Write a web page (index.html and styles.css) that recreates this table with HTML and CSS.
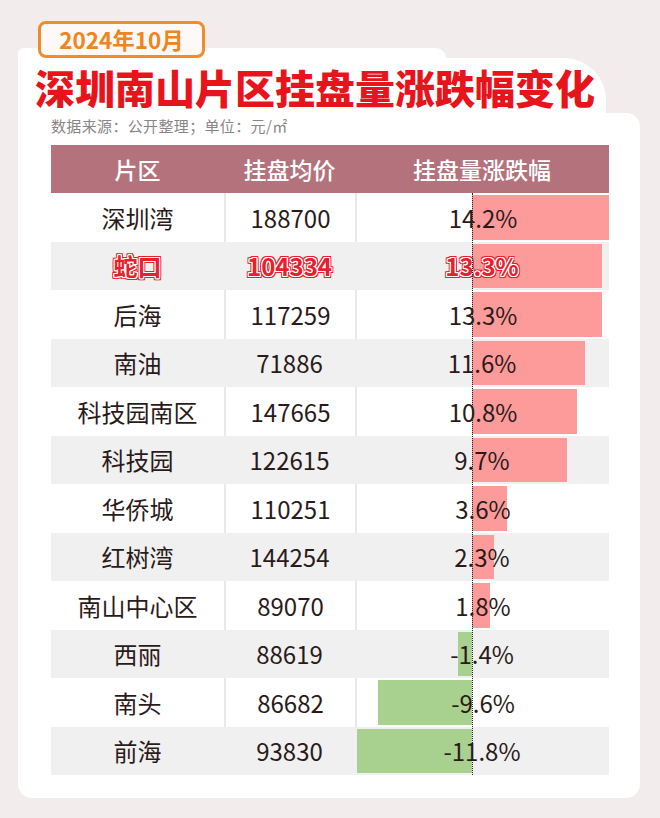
FILE: index.html
```html
<!DOCTYPE html>
<html lang="zh">
<head>
<meta charset="utf-8">
<title>深圳南山片区挂盘量涨跌幅变化</title>
<link rel="stylesheet" href="styles.css">
</head>
<body>
<div class="page">
  <div class="badge">2024年10月</div>
  <div class="tab"></div>
  <div class="head">
    <h1 class="title">深圳南山片区挂盘量涨跌幅变化</h1>
  </div>
  <div class="card">
    <p class="source">数据来源：公开整理；单位：元/㎡</p>
    <div class="table">
      <div class="thead">
        <div>片区</div><div>挂盘均价</div><div>挂盘量涨跌幅</div>
      </div>
      <div class="tbody">
        <div class="row"><div class="c">深圳湾</div><div class="c">188700</div><div class="c pct"><span class="bar pos" style="width:138.5px"></span><span class="v">14.2%</span></div></div>
        <div class="row alt hl"><div class="c">蛇口</div><div class="c">104334</div><div class="c pct"><span class="bar pos" style="width:129.7px"></span><span class="v">13.3%</span></div></div>
        <div class="row"><div class="c">后海</div><div class="c">117259</div><div class="c pct"><span class="bar pos" style="width:129.7px"></span><span class="v">13.3%</span></div></div>
        <div class="row alt"><div class="c">南油</div><div class="c">71886</div><div class="c pct"><span class="bar pos" style="width:113.1px"></span><span class="v">11.6%</span></div></div>
        <div class="row"><div class="c">科技园南区</div><div class="c">147665</div><div class="c pct"><span class="bar pos" style="width:105.3px"></span><span class="v">10.8%</span></div></div>
        <div class="row alt"><div class="c">科技园</div><div class="c">122615</div><div class="c pct"><span class="bar pos" style="width:94.6px"></span><span class="v">9.7%</span></div></div>
        <div class="row"><div class="c">华侨城</div><div class="c">110251</div><div class="c pct"><span class="bar pos" style="width:35.1px"></span><span class="v">3.6%</span></div></div>
        <div class="row alt"><div class="c">红树湾</div><div class="c">144254</div><div class="c pct"><span class="bar pos" style="width:22.4px"></span><span class="v">2.3%</span></div></div>
        <div class="row"><div class="c">南山中心区</div><div class="c">89070</div><div class="c pct"><span class="bar pos" style="width:17.6px"></span><span class="v">1.8%</span></div></div>
        <div class="row alt"><div class="c">西丽</div><div class="c">88619</div><div class="c pct"><span class="bar neg" style="width:13.7px"></span><span class="v">-1.4%</span></div></div>
        <div class="row"><div class="c">南头</div><div class="c">86682</div><div class="c pct"><span class="bar neg" style="width:93.6px"></span><span class="v">-9.6%</span></div></div>
        <div class="row alt"><div class="c">前海</div><div class="c">93830</div><div class="c pct"><span class="bar neg" style="width:115.1px"></span><span class="v">-11.8%</span></div></div>
        <div class="axis"></div>
      </div>
    </div>
  </div>
</div>
</body>
</html>
```

FILE: styles.css
```css
* { box-sizing: border-box; }
html, body { margin: 0; padding: 0; }
body {
  background: #f3ecec;
  font-family: "Noto Sans CJK SC", "Noto Sans", sans-serif;
  color: #2b1a1a;
  width: 660px;
  height: 818px;
  overflow: hidden;
}
.page {
  padding: 21px 20px 0 18px;
}
.badge {
  position: relative;
  z-index: 2;
  margin-left: 20px;
  width: 167px;
  height: 37px;
  border: 3px solid #f08c2c;
  border-radius: 8px;
  background: #fdf9f6;
  color: #ee8422;
  font-weight: 700;
  font-size: 22.5px;
  line-height: 30px;
  text-align: center;
  margin-bottom: -10px;
}
.tab {
  width: 428px;
  height: 10px;
  background: #fff;
  border-radius: 14px 22px 0 0;
}
.head {
  width: 588px;
  height: 55px;
  background: #fff;
  border-radius: 0 42px 0 0;
  padding: 9px 0 0 17px;
}
.title {
  margin: 0;
  font-size: 40px;
  line-height: 40px;
  font-weight: 900;
  color: #e8141c;
  letter-spacing: 0;
  white-space: nowrap;
}
.card {
  background: #fff;
  border-radius: 0 14px 14px 14px;
  padding: 3px 31px 23px 33px;
}
.source {
  margin: 0 0 9px 0;
  font-size: 15px;
  line-height: 20px;
  letter-spacing: 0.35px;
  color: #8a8585;
}
.table { width: 558px; }
.thead, .row {
  display: grid;
  grid-template-columns: 173px 131px 254px;
}
.thead {
  height: 48px;
  background: #b4737c;
  color: #fff;
  font-size: 23px;
  font-weight: 500;
}
.thead div {
  display: flex;
  align-items: center;
  justify-content: center;
}
.tbody { position: relative; }
.row {
  height: 48.5px;
  background: #fff;
  font-size: 24px;
}
.row.alt { background: #f0f0f0; }
.c {
  display: flex;
  align-items: center;
  justify-content: center;
  position: relative;
}
.row:not(.alt) .c + .c { border-left: 2px solid #e8e8e8; }
.pct { overflow: hidden; }
.v { position: relative; z-index: 1; }
.bar {
  position: absolute;
  top: 2px;
  bottom: 2px;
}
.bar.pos { left: 117px; background: #fd9a9a; }
.bar.neg { right: 137px; background: #a8d08e; }
.row:not(.alt) .bar.pos { left: 115px; }
.axis {
  position: absolute;
  top: 0;
  bottom: 0;
  left: 421px;
  width: 0;
  border-left: 1px dotted #222;
  z-index: 3;
}
.hl .c {
  color: #e8202c;
  font-weight: 700;
  text-shadow:
    1px 0 0 #fff, -1px 0 0 #fff, 0 1px 0 #fff, 0 -1px 0 #fff,
    1px 1px 0 #fff, -1px -1px 0 #fff, 1px -1px 0 #fff, -1px 1px 0 #fff,
    2px 0 0 #e8202c, -2px 0 0 #e8202c, 0 2px 0 #e8202c, 0 -2px 0 #e8202c,
    2px 2px 0 #e8202c, -2px -2px 0 #e8202c, 2px -2px 0 #e8202c, -2px 2px 0 #e8202c;
}
```
